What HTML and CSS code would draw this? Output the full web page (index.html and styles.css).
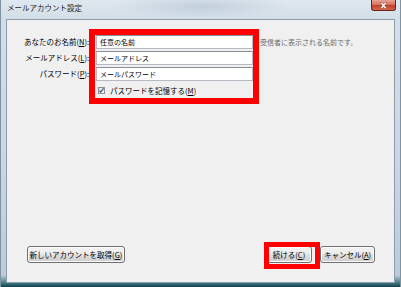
FILE: index.html
```html
<!DOCTYPE html>
<html>
<head>
  <meta charset="utf-8">
  <title>メールアカウント設定</title>
  <link rel="stylesheet" href="styles.css">
</head>
<body>
  <div class="window">
    <div class="titlebar">
      <span class="title">メールアカウント設定</span>
      <div class="close">
        <svg width="9" height="7" viewBox="0 0 9 7"><path d="M1 0.5h2.2l1.3 1.6 1.3-1.6h2.2l-2.3 3 2.3 3h-2.2l-1.3-1.6-1.3 1.6h-2.2l2.3-3z" fill="#fff" stroke="#7a2a1e" stroke-width="0.4"/></svg>
      </div>
    </div>

    <div class="client">
      <div class="fields">
        <label class="caption">あなたのお名前(<u>N</u>):</label>
        <input class="textbox" type="text" value="任意の名前">
        <span class="hint">受信者に表示される名前です。</span>

        <label class="caption">メールアドレス(<u>L</u>):</label>
        <input class="textbox" type="text" value="メールアドレス">
        <span></span>

        <label class="caption">パスワード(<u>P</u>):</label>
        <input class="textbox" type="text" value="メールパスワード">
        <span></span>

        <span></span>
        <div class="remember">
          <span class="checkbox">
            <svg width="7" height="7" viewBox="0 0 7 7"><path d="M1.4 3.6l1.3 1.5 2.9-3.7" fill="none" stroke="#2c4a8a" stroke-width="1.1"/></svg>
          </span>
          <span>パスワードを記憶する(<u>M</u>)</span>
        </div>
      </div>

      <div class="buttons">
        <button class="btn btn-new">新しいアカウントを取得(<u>G</u>)</button>
        <div class="btn-group">
          <button class="btn btn-continue">続ける(<u>C</u>)</button>
          <button class="btn btn-cancel">キャンセル(<u>A</u>)</button>
        </div>
      </div>

      <div class="mark mark-fields"></div>
      <div class="mark mark-continue"></div>
    </div>
  </div>
</body>
</html>
```

FILE: styles.css
```css
body {
  margin: 0;
  font-family: "Noto Sans CJK JP", "Noto Sans", sans-serif;
  color: #000;
}

.window {
  width: 401px;
  height: 287px;
  box-sizing: border-box;
  padding: 0 5px 4px 5px;
  display: flex;
  flex-direction: column;
  background:
    radial-gradient(ellipse 90px 12px at 200px 6px, rgba(150, 170, 190, 0.35), transparent),
    linear-gradient(180deg, #dfe8ef 0px, #d3dee8 18px, #c9d6e1 60%, #bccbd7 96%, #2f6a74 99%, #163e46 100%);
  border-left: 1px solid #7f93a3;
  border-right: 1px solid #7f93a3;
}

.titlebar {
  height: 19px;
  display: flex;
  align-items: flex-start;
  justify-content: space-between;
}

.title {
  font-size: 7.5px;
  line-height: 16px;
  color: #1b1b1b;
  margin-left: 1px;
}

.close {
  width: 25px;
  height: 11px;
  box-sizing: border-box;
  display: flex;
  align-items: center;
  justify-content: center;
  border: 1px solid #6e2216;
  border-top: none;
  border-radius: 0 0 3px 3px;
  background: linear-gradient(180deg, #e9a392 0%, #d7735d 45%, #c2422a 55%, #d3664f 100%);
  margin-right: -1px;
}

.client {
  position: relative;
  flex: 1;
  display: flex;
  flex-direction: column;
  background: #f0f0f0;
  border: 1px solid #8c9caa;
}

.fields {
  display: grid;
  grid-template-columns: 87px 157px auto;
  grid-auto-rows: 14px;
  column-gap: 2px;
  row-gap: 2px;
  padding-top: 15px;
}

.caption {
  font-size: 7.5px;
  line-height: 14px;
  text-align: right;
  white-space: nowrap;
  padding-right: 5px;
}

.textbox {
  margin: 0;
  height: 14px;
  box-sizing: border-box;
  padding: 0 0 0 3px;
  border: 1px solid #b5bac2;
  border-top-color: #8a9099;
  background: #fff;
  font-family: inherit;
  font-size: 7px;
  color: #000;
  outline: none;
}

.hint {
  margin-left: 5px;
  font-size: 7px;
  line-height: 14px;
  color: #6d6d6d;
  white-space: nowrap;
}

.remember {
  grid-column: 2 / 4;
  display: flex;
  align-items: center;
  gap: 5px;
  font-size: 7.5px;
  white-space: nowrap;
  padding-left: 2px;
}

.checkbox {
  width: 7px;
  height: 7px;
  box-sizing: border-box;
  border: 1px solid #8e8f8f;
  background: linear-gradient(135deg, #dcdcdc, #fdfdfd);
  display: flex;
  align-items: center;
  justify-content: center;
}

.checkbox svg {
  flex: none;
}

.buttons {
  margin-top: auto;
  display: flex;
  justify-content: space-between;
  padding: 0 19px 19px 20px;
}

.btn-group {
  display: flex;
  gap: 8px;
}

.btn {
  height: 17px;
  box-sizing: border-box;
  padding: 0;
  border: 1px solid #707070;
  border-radius: 3px;
  background: linear-gradient(180deg, #f3f3f3 0%, #ebebeb 48%, #dddddd 52%, #cfcfcf 100%);
  box-shadow: inset 0 0 0 1px #fbfbfb;
  font-family: inherit;
  font-size: 7.5px;
  color: #000;
  white-space: nowrap;
}

.btn-new {
  width: 98px;
}

.btn-continue {
  width: 46px;
}

.btn-cancel {
  width: 55px;
}

.mark {
  position: absolute;
  box-sizing: border-box;
  border-style: solid;
  border-color: #ff0000;
}

.mark-fields {
  left: 82px;
  top: 9px;
  width: 170px;
  height: 75px;
  border-width: 6px;
}

.mark-continue {
  left: 257px;
  top: 222px;
  width: 56px;
  height: 27px;
  border-width: 5px;
}
```
